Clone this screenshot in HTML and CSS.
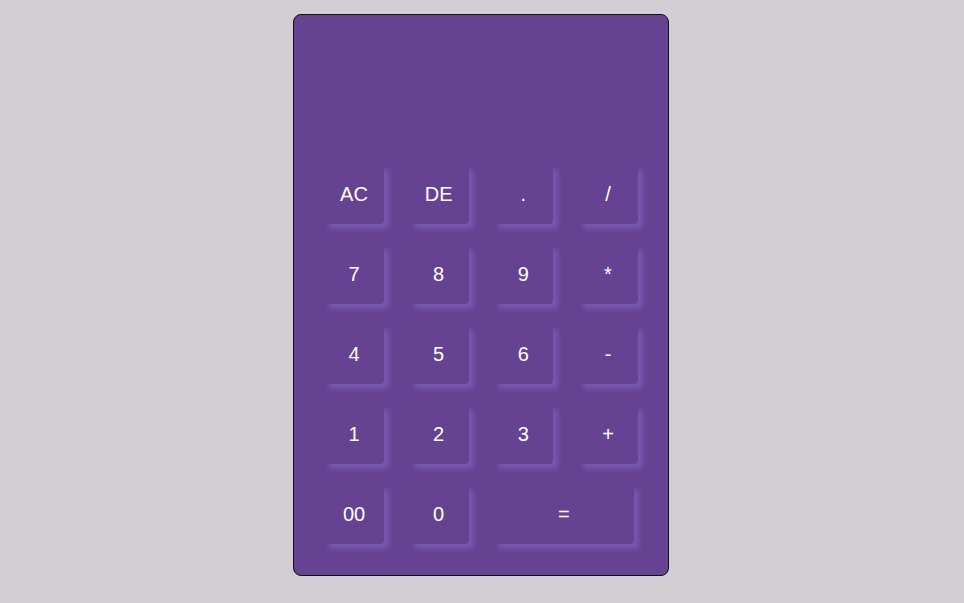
FILE: index.html
```html
<!DOCTYPE html>
<html>
<head>
<meta charset="utf-8">
<link rel="stylesheet" href="styles.css">
</head>
<body>
<div class="calc">
  <div class="display"></div>
  <div class="keys">
    <button class="key">AC</button>
    <button class="key">DE</button>
    <button class="key">.</button>
    <button class="key">/</button>
    <button class="key">7</button>
    <button class="key">8</button>
    <button class="key">9</button>
    <button class="key">*</button>
    <button class="key">4</button>
    <button class="key">5</button>
    <button class="key">6</button>
    <button class="key">-</button>
    <button class="key">1</button>
    <button class="key">2</button>
    <button class="key">3</button>
    <button class="key">+</button>
    <button class="key">00</button>
    <button class="key">0</button>
    <button class="key wide">=</button>
  </div>
</div>
</body>
</html>
```
FILE: styles.css
```css
html, body {
  margin: 0;
  padding: 0;
  background: #d1cfd3;
  height: 100%;
}
body {
  display: flex;
  justify-content: center;
  align-items: flex-start;
  padding-top: 14px;
  box-sizing: border-box;
  font-family: "Liberation Sans", Arial, sans-serif;
}
.calc {
  width: 376px;
  height: 562px;
  box-sizing: border-box;
  background: #654392;
  border: 1px solid #111;
  border-radius: 8px;
  padding: 0 30px;
  display: flex;
  flex-direction: column;
  margin-left: -2px;
}
.display {
  height: 149px;
  flex: none;
}
.keys {
  display: grid;
  grid-template-columns: repeat(4, 60px);
  grid-auto-rows: 60px;
  row-gap: 20px;
  justify-content: space-between;
}
.key {
  background: #654392;
  border: none;
  border-radius: 4px;
  color: #fff;
  font-family: "Liberation Sans", Arial, sans-serif;
  font-size: 20px;
  padding: 0;
  box-shadow: 5px 5px 5px #7658b0;
  cursor: pointer;
}
.wide {
  grid-column: span 2;
  width: 141px;
  justify-self: start;
}
```
